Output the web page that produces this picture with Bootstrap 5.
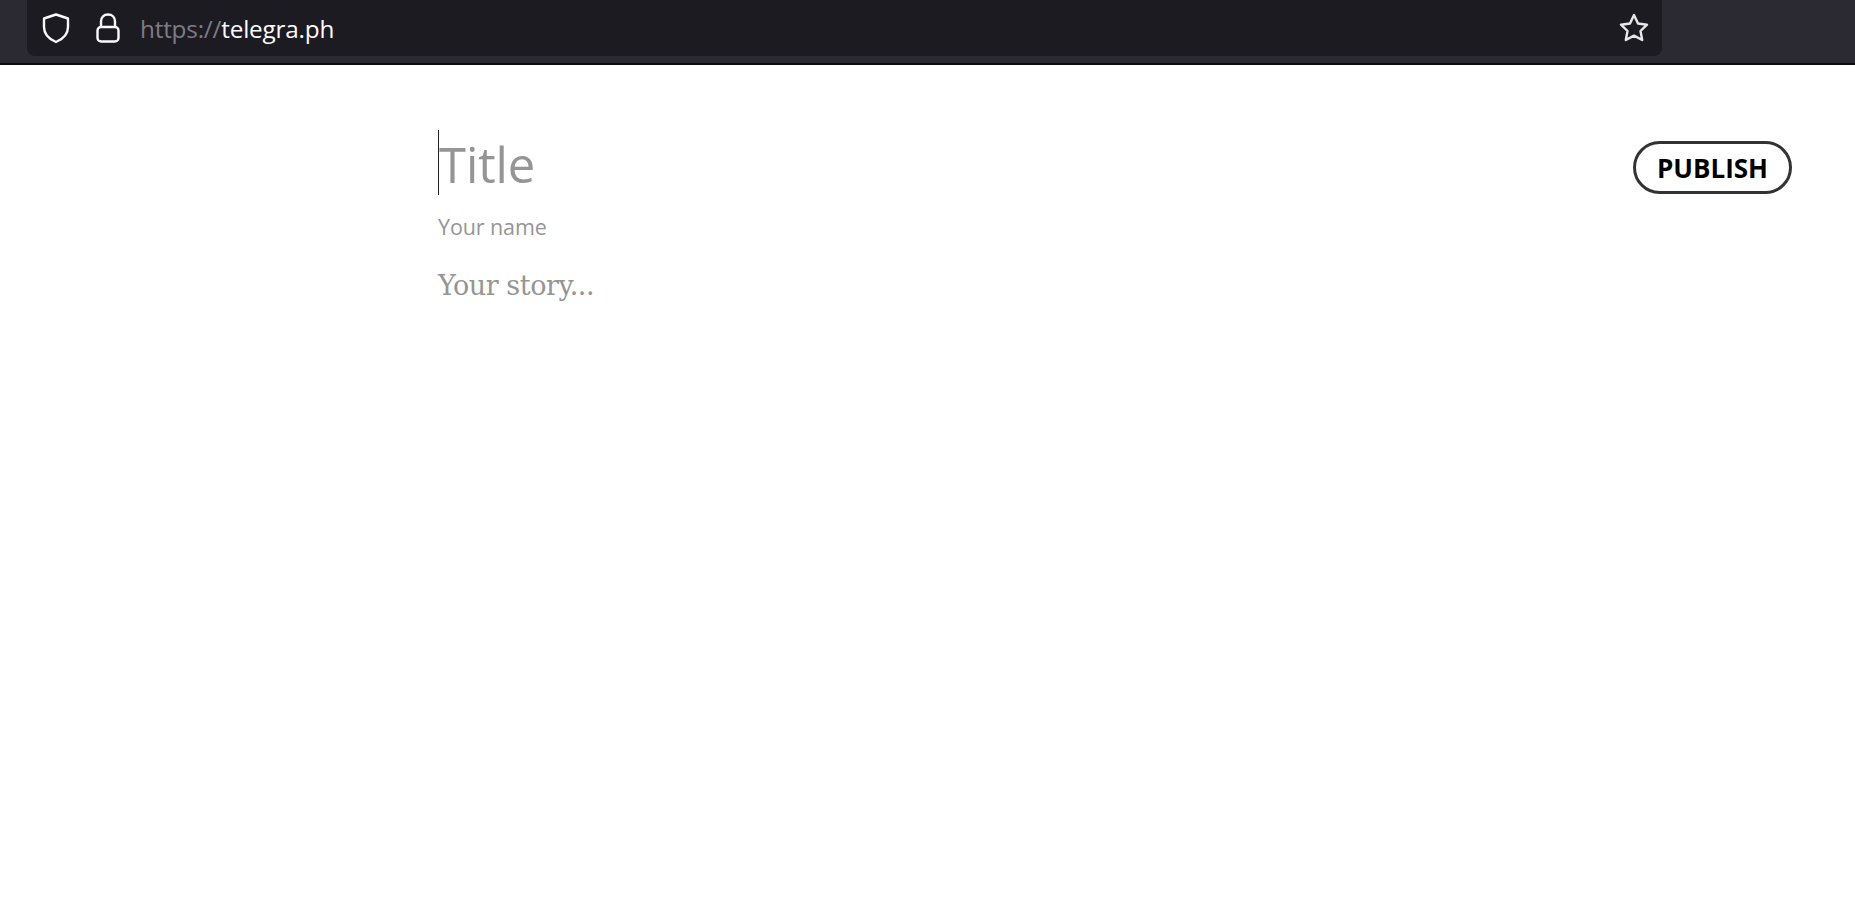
<!DOCTYPE html>
<html>
<head>
    <title>Telegraph</title>
    <link href="https://cdn.jsdelivr.net/npm/bootstrap@5.3.0/dist/css/bootstrap.min.css" rel="stylesheet">
    <style>
        body { background: #fff; font-family: "Open Sans", sans-serif; }
        .browser-bar { height: 65px; background: #2b2a33; border-bottom: 2px solid #0c0c0d; padding-left: 27px; padding-right: 193px; }
        .url-box { height: 56px; background: #1c1b22; border-radius: 0 0 8px 8px; padding: 0 12px 0 14px; }
        .lock-icon { margin-left: 22px; }
        .url-text { font-size: 24.3px; line-height: 1; color: #fbfbfe; margin-left: 17px; margin-top: 2px; letter-spacing: -.2px; }
        .url-text span { color: #7d7c83; }
        .page-area { padding: 65px 63px 0 438px; }
        .title-line { height: 65px; border-left: 1px solid #222; font-size: 49px; line-height: 68px; color: #959595; letter-spacing: -.1px; }
        .name-line { font-size: 21.5px; line-height: 28px; color: #959595; margin-top: 18px; letter-spacing: -.1px; }
        .story-line { font-family: "DejaVu Serif", serif; font-size: 27px; line-height: 34px; color: #959595; margin-top: 28px; letter-spacing: -.45px; }
        .publish-btn { width: 159px; height: 53px; margin-top: 11px; border: 3px solid #333; border-radius: 27px; background: #fff; color: #000; font-size: 26px; font-weight: 700; line-height: 1; padding: 0; }
    </style>
</head>
<body>
    <div class="browser-bar">
        <div class="url-box d-flex align-items-center">
            <svg width="30" height="32" viewBox="0 0 30 32" fill="none" stroke="#fbfbfe" stroke-width="2.4" stroke-linejoin="round">
                <path d="M15 2.5 27 6.5V15C27 23 21 27.5 15 30 9 27.5 3 23 3 15V6.5Z"/>
            </svg>
            <svg class="lock-icon" width="30" height="32" viewBox="0 0 30 32" fill="none" stroke="#fbfbfe" stroke-width="2.4">
                <path d="M8 15V9.5C8 5 11 2.5 15 2.5S22 5 22 9.5V15"/>
                <rect x="4.5" y="15" width="21" height="14.5" rx="3.5"/>
            </svg>
            <div class="url-text"><span>https://</span>telegra.ph</div>
            <svg class="ms-auto" width="32" height="32" viewBox="0 0 32 32" fill="none" stroke="#e8e8ea" stroke-width="2.4" stroke-linejoin="round">
                <path d="M16 3 20 11.5 29 12.7 22.5 19 24.2 28 16 23.6 7.8 28 9.5 19 3 12.7 12 11.5Z"/>
            </svg>
        </div>
    </div>
    <main class="page-area d-flex justify-content-between align-items-start">
        <div>
            <div class="title-line">Title</div>
            <div class="name-line">Your name</div>
            <div class="story-line">Your story...</div>
        </div>
        <button type="button" class="publish-btn">PUBLISH</button>
    </main>
    <script src="https://cdn.jsdelivr.net/npm/bootstrap@5.3.0/dist/js/bootstrap.bundle.min.js"></script>
</body>
</html>
